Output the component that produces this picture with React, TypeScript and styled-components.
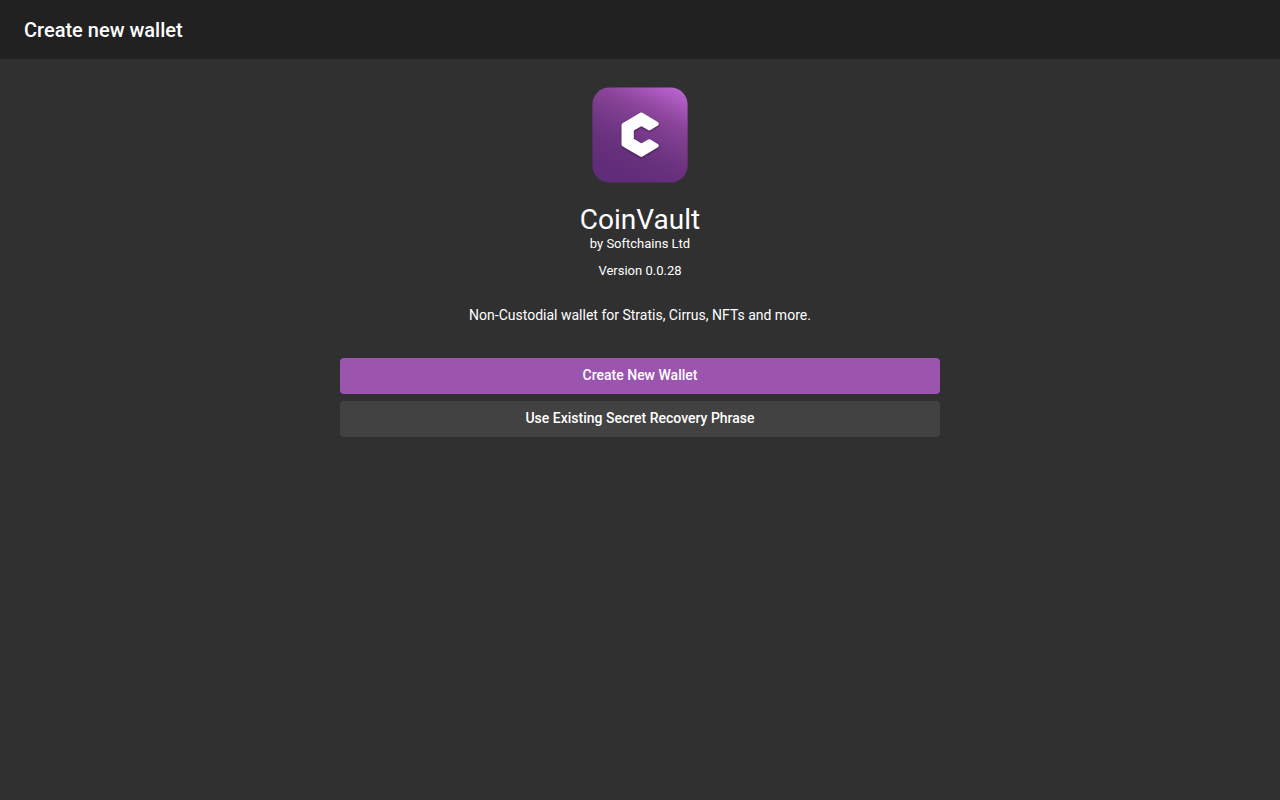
import React from "react";
import styled, { createGlobalStyle } from "styled-components";

const GlobalStyle = createGlobalStyle`
  *, *::before, *::after { box-sizing: border-box; }
  html, body, #root { min-height: 100vh; }
  body {
    margin: 0;
    background: #303030;
    color: #fff;
    font-family: Roboto, "Liberation Sans", sans-serif;
  }
`;

const Toolbar = styled.header`
  display: flex;
  align-items: center;
  padding: 17px 24px 16px;
  background: #212121;
`;

const ToolbarTitle = styled.h1`
  margin: 0;
  font-size: 20px;
  font-weight: 500;
  line-height: 26px;
`;

const Content = styled.main`
  display: flex;
  flex-direction: column;
  align-items: center;
  width: 100%;
  max-width: 632px;
  margin: 0 auto;
  padding: 28px 16px;
  text-align: center;
`;

const Logo = styled.svg`
  display: block;
  width: 96px;
  height: 96px;
  margin-bottom: 21px;
`;

const ProductName = styled.h2`
  margin: 0;
  font-size: 28px;
  font-weight: 400;
  line-height: 32px;
`;

const Detail = styled.p`
  margin: 0 0 11px;
  font-size: 13px;
  line-height: 16px;
`;

const Tagline = styled.p`
  margin: 15px 0 33px;
  font-size: 14px;
  line-height: 20px;
`;

const Actions = styled.div`
  display: flex;
  flex-direction: column;
  gap: 7px;
  width: 100%;
`;

const ActionButton = styled.button<{ $primary?: boolean }>`
  padding: 0 16px 2px;
  border: 0;
  border-radius: 4px;
  background: ${(p) => (p.$primary ? "#9b55ae" : "#424242")};
  color: #fff;
  font-family: inherit;
  font-size: 14px;
  font-weight: 500;
  line-height: 34px;
  cursor: pointer;
`;

const CoinVaultLogo = () => (
  <Logo viewBox="0 0 96 96" role="img" aria-label="CoinVault logo">
    <defs>
      <linearGradient id="base" gradientUnits="userSpaceOnUse" x1="32" y1="88" x2="78" y2="-6">
        <stop offset="0" stopColor="#612c79" />
        <stop offset="0.3" stopColor="#6b3380" />
        <stop offset="0.65" stopColor="#8a4499" />
        <stop offset="1" stopColor="#bf66d6" />
      </linearGradient>
      <filter id="shade" x="-20%" y="-20%" width="140%" height="140%">
        <feDropShadow dx="0" dy="1" stdDeviation="1" floodColor="#2a0c38" floodOpacity="0.7" />
      </filter>
    </defs>
    <rect x="0.4" y="0.4" width="95.2" height="95.2" rx="17" fill="url(#base)" />
    <path
      d="M49.3 27.5 L64.7 36.7 L57.3 41.2 L49.3 36.8 L39.8 42.3 V53 L49.3 58.7 L57.3 54.2 L64.7 58.6 L49.3 67.8 L31.6 57.5 V38 Z"
      fill="#fff"
      stroke="#fff"
      strokeWidth="4"
      strokeLinejoin="round"
      filter="url(#shade)"
    />
  </Logo>
);

export default function App() {
  return (
    <>
      <GlobalStyle />
      <Toolbar>
        <ToolbarTitle>Create new wallet</ToolbarTitle>
      </Toolbar>
      <Content>
        <CoinVaultLogo />
        <ProductName>CoinVault</ProductName>
        <Detail>by Softchains Ltd</Detail>
        <Detail>Version 0.0.28</Detail>
        <Tagline>Non-Custodial wallet for Stratis, Cirrus, NFTs and more.</Tagline>
        <Actions>
          <ActionButton type="button" $primary>Create New Wallet</ActionButton>
          <ActionButton type="button">Use Existing Secret Recovery Phrase</ActionButton>
        </Actions>
      </Content>
    </>
  );
}
